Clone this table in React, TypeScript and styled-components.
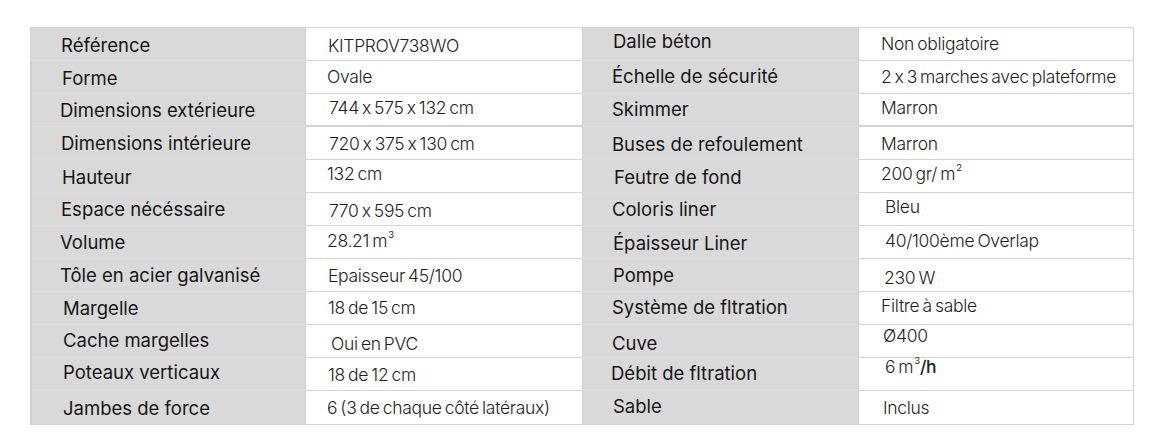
import React from 'react';
import styled, { createGlobalStyle } from 'styled-components';

const GlobalStyle = createGlobalStyle`
  html, body {
    margin:0;
    padding:0;
    background:#ffffff;
  }
  * {
    box-sizing:border-box;
  }
`;

const Page = styled.div`
  width:1158px;
  height:445px;
  padding:27px 0 0 30px;
`;

const Table = styled.div`
  display:inline-grid;
  grid-template-columns:274px 277px 276px 275px;
  grid-auto-rows:33px;
  border:1px solid #d2d2d2;
  border-right-color:#cfcfcf;
`;

const Cell = styled.div<{ $dx?: number; $dy?: number }>`
  display:flex;
  align-items:center;
  white-space:nowrap;
  transform:translate(${({ $dx = 0 }) => $dx}px, ${({ $dy = 0 }) => $dy}px);
`;

const CellBox = styled.div<{ $label?: boolean; $thick?: boolean; $last?: boolean }>`
  display:flex;
  align-items:center;
  background:${({ $label }) => ($label ? '#d9d9d9' : '#ffffff')};
  border-bottom:${({ $thick }) => ($thick ? '2px' : '1px')} solid
    ${({ $label }) => ($label ? '#dedede' : '#d3d3d3')};
  ${({ $last }) => ($last ? 'border-bottom:none;' : '')}
  border-left:1px solid ${({ $label }) => ($label ? '#cfcfcf' : '#d0d0d0')};
  padding-left:${({ $label }) => ($label ? '30px' : '22px')};
  &:first-child {
    border-left:none;
  }
`;

const LabelText = styled(Cell)`
  font-family:Inter, 'Liberation Sans', sans-serif;
  font-size:18.5px;
  font-weight:400;
  color:#161616;
  letter-spacing:0px;
`;

const ValueText = styled(Cell)`
  font-family:Inter, 'Liberation Sans', sans-serif;
  font-size:17.5px;
  font-weight:300;
  color:#1e1e1e;
  letter-spacing:-0.3px;
  word-spacing:-1.5px;
`;

const Sup = styled.span`
  font-size:9.5px;
  position:relative;
  top:-6px;
  margin-left:1px;
  font-weight:400;
`;

const Bold = styled.span`
  font-weight:500;
`;

type Item = { text: React.ReactNode; dx?: number; dy?: number };
type Row = [Item, Item, Item, Item];

const ROWS: Row[] = [
  [
    { text: 'Référence', dy: 1 },
    { text: 'KITPROV738WO', dy: 1 },
    { text: 'Dalle béton', dy: -3 },
    { text: 'Non obligatoire', dy: -1 },
  ],
  [
    { text: 'Forme', dy: 1 },
    { text: 'Ovale', dx: -1, dy: -1 },
    { text: 'Échelle de sécurité', dx: -1, dy: -1 },
    { text: '2 x 3 marches avec plateforme', dy: -1 },
  ],
  [
    { text: 'Dimensions extérieure', dx: -2 },
    { text: '744 x 575 x 132 cm', dx: 1, dy: -2 },
    { text: 'Skimmer', dx: -1, dy: -1 },
    { text: 'Marron', dy: -2 },
  ],
  [
    { text: 'Dimensions intérieure', dx: -1 },
    { text: '720 x 375 x 130 cm', dx: 1 },
    { text: 'Buses de refoulement', dx: -1, dy: 1 },
    { text: 'Marron' },
  ],
  [
    { text: 'Hauteur', dy: 1 },
    { text: '132 cm', dx: -1, dy: -3 },
    { text: 'Feutre de fond', dx: 1, dy: 1 },
    { text: <>200 gr/ m<Sup>2</Sup></>, dy: -3 },
  ],
  [
    { text: 'Espace nécéssaire', dx: -1 },
    { text: '770 x 595 cm', dx: 1, dy: 1 },
    { text: 'Coloris liner', dx: -1 },
    { text: 'Bleu', dx: 4, dy: -3 },
  ],
  [
    { text: 'Volume', dx: -2 },
    { text: <>28.21 m<Sup>3</Sup></>, dx: -1, dy: -2 },
    { text: 'Épaisseur Liner', dy: 1 },
    { text: '40/100ème Overlap', dx: 4, dy: -2 },
  ],
  [
    { text: 'Tôle en acier galvanisé', dx: -2 },
    { text: 'Epaisseur 45/100' },
    { text: 'Pompe' },
    { text: '230 W', dx: 3, dy: 2 },
  ],
  [
    { text: 'Margelle', dx: 1 },
    { text: '18 de 15 cm', dy: -1 },
    { text: 'Système de fltration', dx: -1, dy: -1 },
    { text: 'Filtre à sable', dy: -3 },
  ],
  [
    { text: 'Cache margelles', dx: 1, dy: -1 },
    { text: 'Oui en PVC', dx: 3, dy: 2 },
    { text: 'Cuve', dx: -1, dy: 2 },
    { text: 'Ø400', dx: 2, dy: -6 },
  ],
  [
    { text: 'Poteaux verticaux', dx: 1, dy: -2 },
    { text: '18 de 12 cm' },
    { text: 'Débit de fltration', dx: -2, dy: -1 },
    { text: <>6 m<Sup>3</Sup><Bold>/h</Bold></>, dx: 4, dy: -8 },
  ],
  [
    { text: 'Jambes de force', dx: 1 },
    { text: '6 (3 de chaque côté latéraux)', dx: -1 },
    { text: 'Sable', dy: -2 },
    { text: 'Inclus', dx: 2 },
  ],
];

function App() {
  return (
    <Page>
      <GlobalStyle />
      <Table>
        {ROWS.map((row, r) => row.map((item, c) => {
          const isLabel = c % 2 === 0;
          const Text = isLabel ? LabelText : ValueText;
          return (
            <CellBox
              key={`${r}-${c}`}
              $label={isLabel}
              $thick={r === 2}
              $last={r === ROWS.length - 1}
            >
              <Text $dx={item.dx} $dy={item.dy}>{item.text}</Text>
            </CellBox>
          );
        }))}
      </Table>
    </Page>
  );
}

export default App;
